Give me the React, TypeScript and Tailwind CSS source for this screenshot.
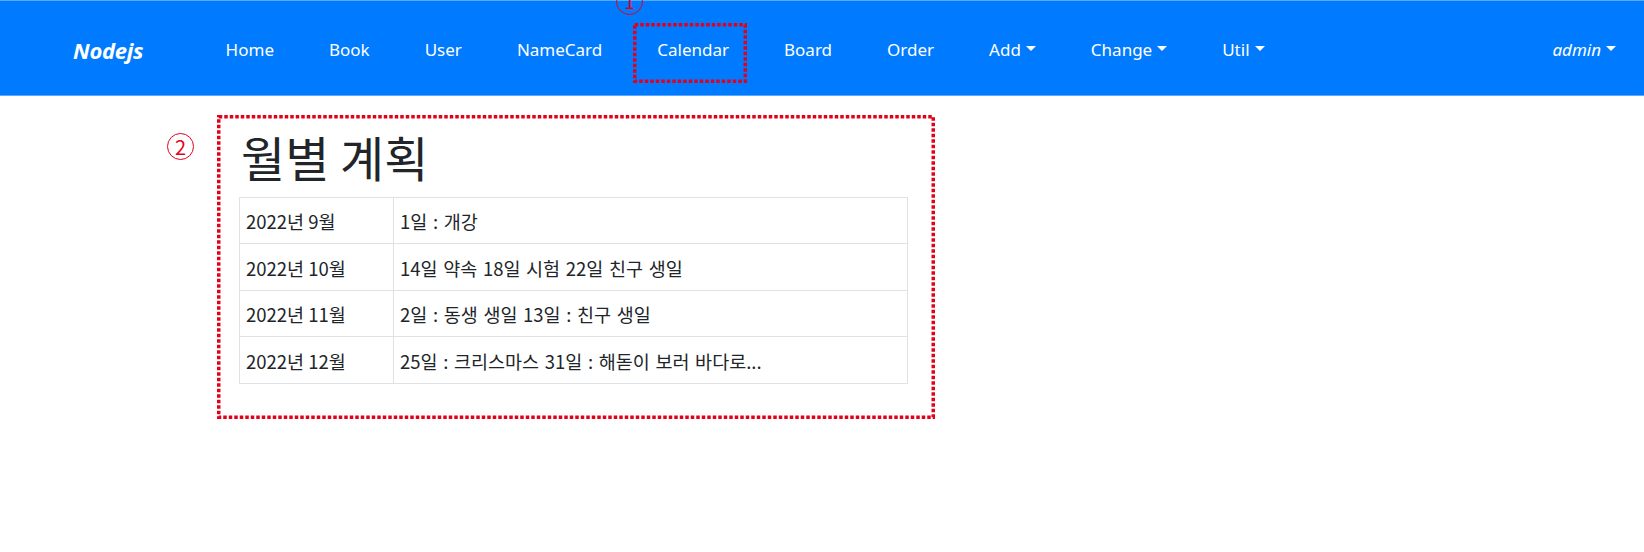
import React from "react";

const navLinks = ["Home", "Book", "User", "NameCard", "Calendar", "Board", "Order"];
const dropdowns = ["Add", "Change", "Util"];

const plans = [
  { month: "2022년 9월", text: "1일 : 개강" },
  { month: "2022년 10월", text: "14일 약속 18일 시험 22일 친구 생일" },
  { month: "2022년 11월", text: "2일 : 동생 생일 13일 : 친구 생일" },
  { month: "2022년 12월", text: "25일 : 크리스마스 31일 : 해돋이 보러 바다로..." },
];

const Caret = () => (
  <span className="inline-block ml-[5px] mb-[3px] w-0 h-0 border-x-[5px] border-t-[5px] border-x-transparent border-t-white align-middle" />
);

// red dotted marker drawn over the page
const Marker = ({ className, w, h }: { className: string; w: number; h: number }) => (
  <svg className={"absolute pointer-events-none " + className} width={w} height={h}>
    <rect
      x={1.75}
      y={1.75}
      width={w - 3.5}
      height={h - 3.5}
      fill="none"
      stroke="#e3001b"
      strokeWidth={3.5}
      strokeDasharray="3.5 2"
    />
  </svg>
);

const App = () => {
  return (
    <div className="relative min-h-[552px] bg-white overflow-hidden">
      <nav className="h-[96px] pt-[4px] bg-[#007bff] border-y border-[#5aaaff] flex items-center font-['Noto_Sans',sans-serif] text-white">
        <a className="pl-[73px] text-[22px] font-bold italic tracking-[-0.3px]">Nodejs</a>
        <ul className="flex items-center ml-[55px] text-[17px]">
          {navLinks.map((l) => (
            <li key={l} className="px-[27.5px]">
              {l}
            </li>
          ))}
          {dropdowns.map((l) => (
            <li key={l} className="px-[27.5px] flex items-center">
              {l}
              <Caret />
            </li>
          ))}
        </ul>
        <div className="ml-auto pr-[28px] text-[17px] italic font-normal flex items-center">
          admin
          <Caret />
        </div>
      </nav>

      <div className="ml-[239px] w-[669px] pt-[32px] font-['Noto_Sans_CJK_KR',sans-serif] text-[#212529]">
        <h1 className="text-[48px] leading-[1.2] pl-[2px] mb-[11px]">월별 계획</h1>
        <table className="w-full border-collapse text-[18.5px]">
          <tbody>
            {plans.map((p) => (
              <tr key={p.month} className="h-[46.5px]">
                <td className="w-[154px] border border-[#dee2e6] px-[6px] pt-[4px]">{p.month}</td>
                <td className="border border-[#dee2e6] px-[6px] pt-[4px] [word-spacing:1.5px]">{p.text}</td>
              </tr>
            ))}
          </tbody>
        </table>
      </div>

      <Marker className="left-[633px] top-[23px]" w={114} h={60} />
      <Marker className="left-[217px] top-[115px]" w={718} h={304} />

      <span className="absolute left-[616px] top-[-12px] w-[27px] h-[27px] rounded-full border border-[#e3001b] text-[#e3001b] flex items-center justify-center text-[19px] font-['Noto_Sans_CJK_KR',serif]">
        1
      </span>
      <span className="absolute left-[167px] top-[133px] w-[27px] h-[27px] rounded-full border border-[#e3001b] text-[#e3001b] flex items-center justify-center text-[20px] font-['Noto_Sans_CJK_KR',sans-serif]">
        2
      </span>
    </div>
  );
};

export default App;
